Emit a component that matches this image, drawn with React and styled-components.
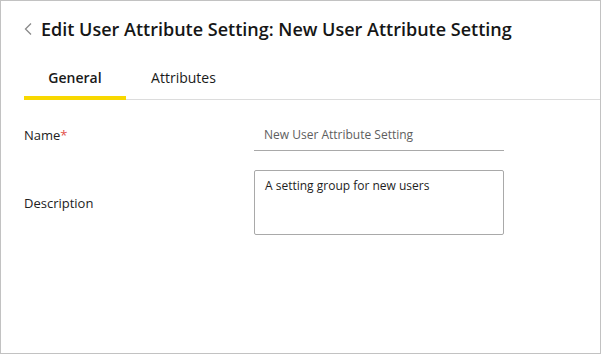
import React from "react";
import styled, { createGlobalStyle } from "styled-components";

const Global = createGlobalStyle`
  html, body { margin: 0; padding: 0; background: #fff; }
  body { font-family: "Open Sans", "Noto Sans", sans-serif; color: #1e1e1e; }
  * { box-sizing: border-box; }
`;

const Frame = styled.div`
  width: 601px;
  height: 354px;
  border: 1px solid #c2c2c2;
  background: #fff;
  display: flex;
  flex-direction: column;
`;

const Header = styled.header`
  display: flex;
  align-items: center;
  gap: 8px;
  padding: 12px 24px 0 23px;
  height: 44px;
`;

const Back = styled.button`
  border: 0;
  background: none;
  padding: 0;
  display: flex;
  align-items: center;
  cursor: pointer;
  width: 9px;
`;

const Title = styled.h1`
  margin: 0;
  font-size: 18px;
  font-weight: 600;
  color: #161616;
  line-height: 26px;
`;

const Tabs = styled.nav`
  display: flex;
  margin: 12px 0 0 23px;
  border-bottom: 1px solid #dcdcdc;
`;

const Tab = styled.div`
  width: ${(p) => p.$w}px;
  text-align: center;
  font-size: 14px;
  font-weight: ${(p) => (p.$active ? 600 : 400)};
  color: #1a1a1a;
  padding: 11px 0 8px;
  line-height: 20px;
  margin-bottom: -1px;
  border-bottom: 4px solid ${(p) => (p.$active ? "#f8d800" : "transparent")};
`;

const Form = styled.div`
  display: grid;
  grid-template-columns: 230px 250px;
  row-gap: 19px;
  padding: 19px 0 0 23px;
`;

const Label = styled.div`
  font-size: 13px;
  color: #222;
  display: flex;
  align-items: center;
`;

const Star = styled.span`
  color: #e2504a;
`;

const Field = styled.div`
  height: 32px;
  border-bottom: 1px solid #a9a9a9;
  font-size: 12px;
  color: #5e5e5e;
  padding: 7px 0 0 10px;
`;

const Area = styled.div`
  height: 65px;
  border: 1px solid #a9a9a9;
  border-radius: 2px;
  font-size: 12px;
  color: #1e1e1e;
  padding: 6px 10px;
`;

export default function App() {
  return (
    <>
      <Global />
      <Frame>
        <Header>
          <Back aria-label="Back">
            <svg width="8" height="12" viewBox="0 0 8 12">
              <path d="M7 0.5 L1.5 6 L7 11.5" fill="none" stroke="#8a8a8a" strokeWidth="1.3" />
            </svg>
          </Back>
          <Title>Edit User Attribute Setting: New User Attribute Setting</Title>
        </Header>
        <Tabs>
          <Tab $active $w={102}>General</Tab>
          <Tab $w={115}>Attributes</Tab>
        </Tabs>
        <Form>
          <Label>
            Name<Star>*</Star>
          </Label>
          <Field>New User Attribute Setting</Field>
          <Label>Description</Label>
          <Area>A setting group for new users</Area>
        </Form>
      </Frame>
    </>
  );
}
